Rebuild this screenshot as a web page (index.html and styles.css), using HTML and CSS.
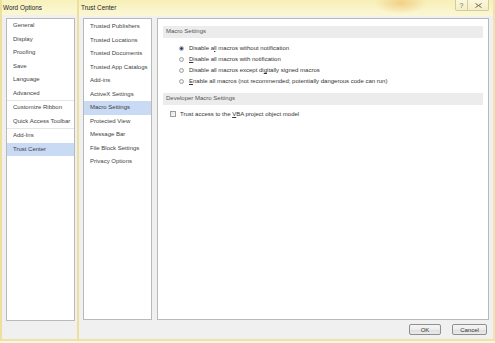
FILE: index.html
```html
<!DOCTYPE html>
<html lang="en">
<head>
    <meta charset="UTF-8">
    <title>Trust Center</title>
    <link rel="stylesheet" href="styles.css">
</head>
<body class="desktop">

    <!-- Word Options (behind) -->
    <div class="win win-options">
        <div class="title-bar">
            <span class="title-text">Word Options</span>
        </div>
        <div class="win-body">
            <ul class="nav-list">
                <li>General</li>
                <li>Display</li>
                <li>Proofing</li>
                <li>Save</li>
                <li>Language</li>
                <li class="sep-after">Advanced</li>
                <li>Customize Ribbon</li>
                <li class="sep-after">Quick Access Toolbar</li>
                <li>Add-Ins</li>
                <li class="active">Trust Center</li>
            </ul>
        </div>
    </div>

    <!-- Trust Center dialog -->
    <div class="win win-trust">
        <div class="title-bar">
            <span class="title-text">Trust Center</span>
            <div class="title-btns">
                <div class="title-btn help">?</div>
                <div class="title-btn close">
                    <svg width="7" height="5" viewBox="0 0 7 5">
                        <path d="M0.5 0.5 L6.5 4.5 M6.5 0.5 L0.5 4.5" stroke="#6d6a55" stroke-width="1" fill="none"/>
                    </svg>
                </div>
            </div>
        </div>
        <div class="win-body">
            <div class="panes">
                <ul class="nav-list tc-nav">
                    <li>Trusted Publishers</li>
                    <li>Trusted Locations</li>
                    <li>Trusted Documents</li>
                    <li>Trusted App Catalogs</li>
                    <li>Add-ins</li>
                    <li>ActiveX Settings</li>
                    <li class="active">Macro Settings</li>
                    <li>Protected View</li>
                    <li>Message Bar</li>
                    <li>File Block Settings</li>
                    <li>Privacy Options</li>
                </ul>
                <div class="content">
                    <div class="section-head">Macro Settings</div>
                    <div class="radio-group">
                        <div class="opt"><span class="radio checked"></span><span>Disable a<u>l</u>l macros without notification</span></div>
                        <div class="opt"><span class="radio"></span><span><u>D</u>isable all macros with notification</span></div>
                        <div class="opt"><span class="radio"></span><span>Disable all macros except di<u>g</u>itally signed macros</span></div>
                        <div class="opt"><span class="radio"></span><span><u>E</u>nable all macros (not recommended; potentially dangerous code can run)</span></div>
                    </div>
                    <div class="section-head dev-head">Developer Macro Settings</div>
                    <div class="opt check-row"><span class="check"></span><span>Trust access to the <u>V</u>BA project object model</span></div>
                </div>
            </div>
            <div class="footer">
                <button class="btn btn-ok">OK</button>
                <button class="btn">Cancel</button>
            </div>
        </div>
    </div>

</body>
</html>
```

FILE: styles.css
```css
* {
    box-sizing: border-box;
}
.desktop {
    margin: 0;
    width: 495px;
    height: 343px;
    display: flex;
    align-items: flex-start;
    background-color: #fbf8e2;
    font-family: "Liberation Sans", Arial, sans-serif;
    font-size: 6px;
    color: #333;
    overflow: hidden;
}
.win {
    height: 341px;
    display: flex;
    flex-direction: column;
    border-left: 2px solid #ece09c;
    border-bottom: 2px solid #ede3a6;
    background-color: #f0f0f0;
}
.win-options {
    width: 77px;
}
.win-trust {
    width: 418px;
    border-right: 2px solid #ede5b0;
}
.title-bar {
    height: 16px;
    display: flex;
    align-items: flex-start;
    background: linear-gradient(to bottom, #f8f1bd, #fbf7d3);
}
.win-options .title-bar {
    height: 15px;
}
.win-trust .title-bar {
    background:
        radial-gradient(ellipse 26px 11px at 322px 3px, rgba(238, 186, 100, 0.6), rgba(238, 186, 100, 0)),
        linear-gradient(to bottom, #f7efb6, #fbf7d6);
}
.title-text {
    font-size: 6.4px;
    color: #1e1e1e;
    padding: 4px 0 0 1px;
}
.win-trust .title-text {
    padding-left: 2px;
}
.title-btns {
    margin-left: auto;
    margin-right: 4px;
    display: flex;
}
.title-btn {
    height: 11px;
    display: flex;
    align-items: center;
    justify-content: center;
    border: 1px solid #d3cca3;
    border-top: none;
    background: linear-gradient(to bottom, #fbf7dc, #f5eec6);
    color: #6d6a55;
    font-size: 7px;
}
.help {
    width: 13px;
    border-radius: 0 0 0 2px;
}
.close {
    width: 21px;
    border-left: none;
    border-radius: 0 0 2px 0;
}
.win-body {
    flex: 1;
    display: flex;
    flex-direction: column;
}
.win-options .win-body {
    padding: 3px 2px 18px 4px;
}
.win-trust .win-body {
    padding: 2px 4px 0 4px;
}
.nav-list {
    list-style: none;
    margin: 0;
    padding: 0.3px 0 0 0;
    flex: 1;
    background-color: #fff;
    border: 1px solid #b9b9b9;
    color: #3f3f3f;
}
.nav-list li {
    height: 13.5px;
    line-height: 13.5px;
    padding-left: 6px;
    white-space: nowrap;
}
.nav-list li.sep-after {
    border-bottom: 1px solid #e6e6e6;
    height: 14.5px;
}
.nav-list li.active {
    background-color: #c8daf4;
}
.panes {
    height: 302px;
    display: flex;
    gap: 5px;
}
.tc-nav {
    flex: 0 0 69px;
    padding-top: 1px;
}
.content {
    flex: 1;
    background-color: #fff;
    border: 1px solid #b9b9b9;
    padding: 7px 5px 0 5px;
}
.section-head {
    height: 11.5px;
    line-height: 11.5px;
    padding-left: 3px;
    background-color: #ececec;
    color: #555;
}
.radio-group {
    margin-top: 5px;
    padding-left: 16px;
}
.opt {
    height: 11px;
    display: flex;
    align-items: center;
    gap: 5px;
    white-space: nowrap;
}
.radio {
    width: 5px;
    height: 5px;
    border-radius: 50%;
    border: 1px solid #a4a4a4;
    background: radial-gradient(circle, #f7f7f7, #e2e2e2);
}
.radio.checked {
    background: radial-gradient(circle, #213a66 0, #3a5c92 1.2px, #e9e9e9 1.8px);
}
.dev-head {
    margin-top: 6.5px;
}
.check-row {
    margin-top: 3.5px;
    padding-left: 7px;
    gap: 4px;
}
.check {
    width: 6px;
    height: 6px;
    border: 1px solid #9c9c9c;
    background: linear-gradient(135deg, #e4e4e4, #fafafa);
}
.footer {
    height: 18px;
    display: flex;
    justify-content: flex-end;
    align-items: flex-start;
    gap: 11px;
    padding: 4px 2px 0 0;
}
.btn {
    height: 11px;
    width: 35px;
    padding: 0;
    font-family: "Liberation Sans", Arial, sans-serif;
    font-size: 6px;
    color: #333;
    border: 1px solid #8e8f8f;
    border-radius: 2px;
    background: linear-gradient(to bottom, #f6f6f6 0, #ececec 50%, #dedede 51%, #e9e9e9 100%);
}
.btn-ok {
    width: 32px;
}
```
